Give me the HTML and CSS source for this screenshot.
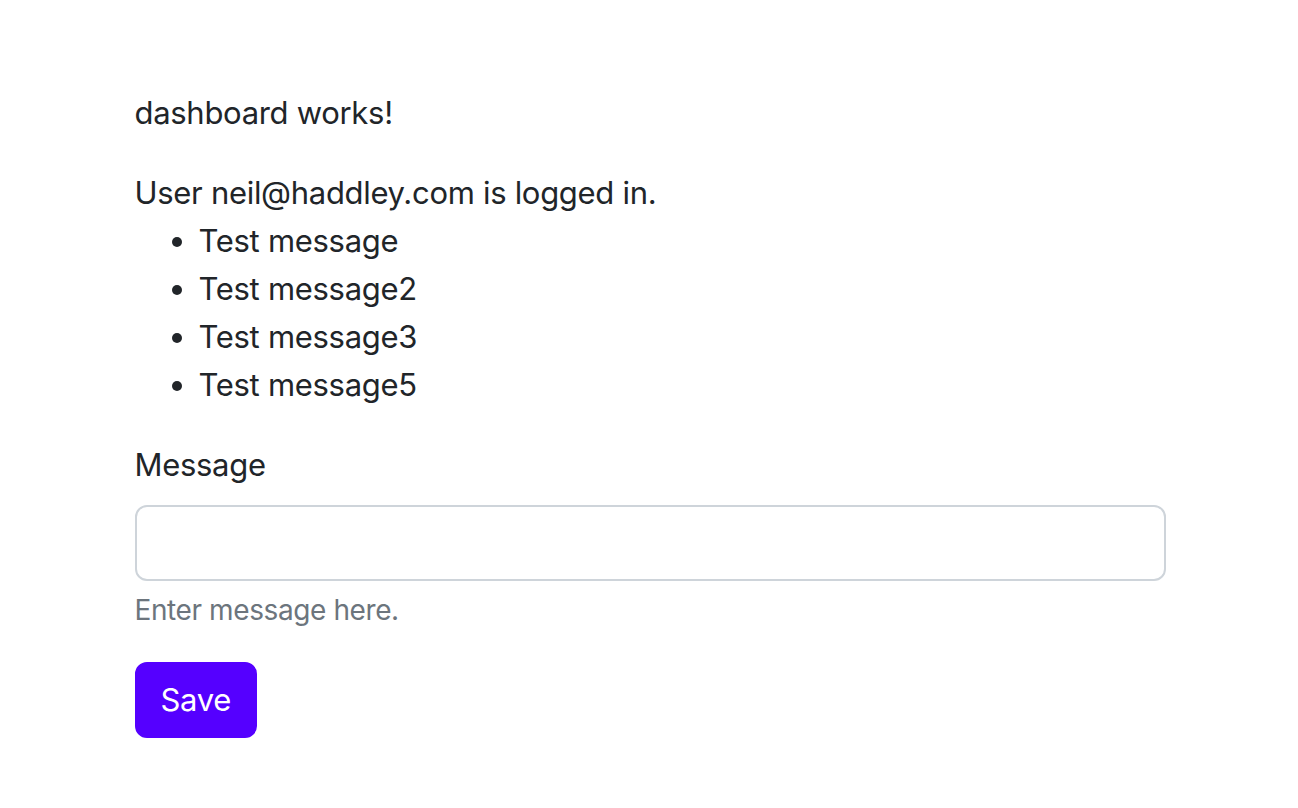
FILE: index.html
```html
<!DOCTYPE html>
<html lang="en">
<head>
<meta charset="utf-8">
<title>Dashboard</title>
<link rel="stylesheet" href="styles.css">
</head>
<body>
<div class="container">
  <p class="para">dashboard works!</p>
  <div class="user">User neil@haddley.com is logged in.</div>
  <ul class="messages">
    <li>Test message</li>
    <li>Test message2</li>
    <li>Test message3</li>
    <li>Test message5</li>
  </ul>
  <form class="form">
    <div class="field">
      <label class="label" for="msg">Message</label>
      <input class="control" id="msg" type="text">
      <div class="hint">Enter message here.</div>
    </div>
    <button class="btn" type="button">Save</button>
  </form>
</div>
</body>
</html>
```

FILE: styles.css
```css
* { box-sizing: border-box; }
html, body { margin: 0; padding: 0; background: #fff; }
body {
  font-family: Inter, "Noto Sans", "Liberation Sans", sans-serif;
  font-size: 31px;
  line-height: 48px;
  letter-spacing: -0.3px;
  color: #212529;
}
.container {
  width: 1031px;
  margin: 0 auto;
  padding-top: 89px;
  position: relative;
  left: 1px;
}
.para { margin: 0 0 32px; }
.user { margin: 0; }
.messages {
  margin: 0 0 32px;
  padding-left: 64px;
}
.form { margin: 0; }
.field { margin-bottom: 31px; }
.label {
  display: block;
  margin-bottom: 16px;
}
.control {
  display: block;
  width: 100%;
  height: 76px;
  padding: 12px 24px;
  font: inherit;
  color: #212529;
  background: #fff;
  border: 2px solid #ced4da;
  border-radius: 12px;
  outline: none;
}
.hint {
  margin-top: 8px;
  font-size: 28px;
  line-height: 42px;
  letter-spacing: -0.4px;
  color: #6c757d;
}
.btn {
  display: inline-block;
  height: 76px;
  padding: 12px 24px;
  font: inherit;
  letter-spacing: -0.3px;
  color: #fff;
  background: #5500ff;
  border: 2px solid #5500ff;
  border-radius: 12px;
  cursor: pointer;
}
```
